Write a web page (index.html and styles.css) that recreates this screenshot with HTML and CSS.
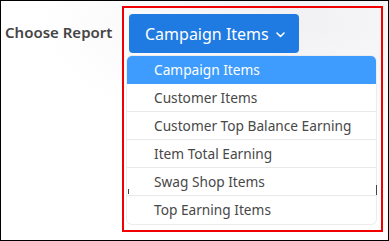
FILE: index.html
```html
<!DOCTYPE html>
<html>
<head>
<meta charset="utf-8">
<link rel="stylesheet" href="styles.css">
</head>
<body>
<div class="frame">
  <div class="label">Choose Report</div>
  <div class="highlight">
    <button class="btn">Campaign Items
      <svg class="chev" width="9" height="6" viewBox="0 0 9 6"><path d="M1 1 L4.5 4.5 L8 1" fill="none" stroke="#fff" stroke-width="1.6" stroke-linecap="round" stroke-linejoin="round"/></svg>
    </button>
    <ul class="menu">
      <li class="item active">Campaign Items</li>
      <li class="item">Customer Items</li>
      <li class="item">Customer Top Balance Earning</li>
      <li class="item">Item Total Earning</li>
      <li class="item">Swag Shop Items</li>
      <li class="item">Top Earning Items</li>
    </ul>
    <span class="mark mark-l"></span>
    <span class="mark mark-r"></span>
  </div>
</div>
</body>
</html>
```
FILE: styles.css
```css
html, body {
  margin: 0;
  padding: 0;
  background: #fff;
}
.frame {
  box-sizing: border-box;
  width: 389px;
  height: 241px;
  border: 1px solid #000;
  display: flex;
  align-items: flex-start;
  padding: 5px 0 0 4px;
  font-family: "Noto Sans", "Open Sans", sans-serif;
  background: radial-gradient(ellipse 260px 120px at 300px 20px, #f1f1f4 0%, #ffffff 100%);
}
.label {
  width: 117px;
  padding-top: 15px;
  font-size: 15px;
  font-weight: 600;
  color: #454545;
  line-height: 22px;
}
.highlight {
  position: relative;
  box-sizing: border-box;
  width: 261px;
  height: 226px;
  border: 2px solid #f00000;
  padding: 6px 0 0 3px;
}
.btn {
  box-sizing: border-box;
  margin-left: 2px;
  width: 170px;
  height: 39px;
  border: none;
  border-radius: 4px;
  background: #1f7be1;
  color: #fff;
  font-family: "Noto Sans", "Open Sans", sans-serif;
  font-size: 16px;
  padding: 0 0 0 16px;
  display: flex;
  align-items: center;
  gap: 7px;
  text-align: left;
}
.chev {
  margin-top: 3px;
}
.menu {
  list-style: none;
  margin: 3px 0 0 0;
  padding: 0;
  width: 249px;
  background: #fff;
  border-radius: 5px;
  box-shadow: 0 0 0 1px #ececec;
  overflow: hidden;
}
.item {
  box-sizing: border-box;
  height: 28px;
  line-height: 27px;
  padding-left: 27px;
  font-size: 13.7px;
  color: #484848;
  border-bottom: 1px solid #e9e9e9;
}
.item:last-child {
  border-bottom: none;
}
.item.active {
  background: #3d9cfd;
  color: #fff;
  border-bottom: none;
}
.mark {
  position: absolute;
  background: #444;
}
.mark-l {
  left: 4px;
  top: 181px;
  width: 1px;
  height: 5px;
}
.mark-r {
  left: 252px;
  top: 177px;
  width: 1px;
  height: 10px;
}
```
